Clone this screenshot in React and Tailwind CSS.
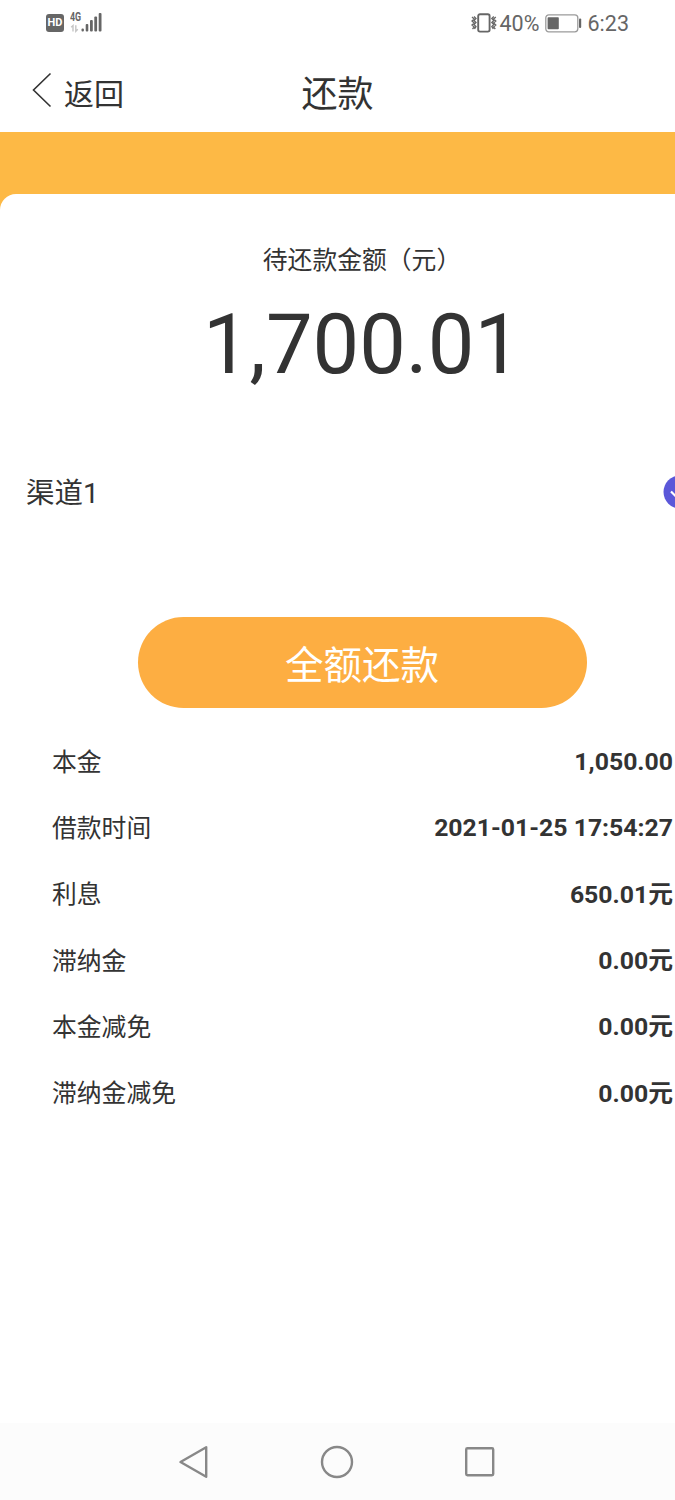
const details = [
  { label: '本金', value: '1,050.00' },
  { label: '借款时间', value: '2021-01-25 17:54:27' },
  { label: '利息', value: '650.01元' },
  { label: '滞纳金', value: '0.00元' },
  { label: '本金减免', value: '0.00元' },
  { label: '滞纳金减免', value: '0.00元' },
]

function SignalIcon() {
  return (
    <svg width="33" height="24" viewBox="0 0 33 24" fill="none">
      <g stroke="#c4c4c4" strokeWidth="1.4">
        <path d="M1.2 16.2 3 14.5V20.5M5.8 14.2V20.2L7.8 18.2" />
      </g>
      <g fill="#666">
        <rect x="11.5" y="17.5" width="2.4" height="3" rx="1" />
        <rect x="15.7" y="13" width="2.6" height="7.5" rx="1" />
        <rect x="20" y="9" width="2.8" height="11.5" rx="1" />
        <rect x="24.3" y="5.5" width="2.8" height="15" rx="1" />
        <rect x="28.7" y="2" width="2.8" height="18.5" rx="1" />
      </g>
    </svg>
  )
}

function VibrateIcon() {
  return (
    <svg width="26" height="20" viewBox="0 0 26 20" fill="none" stroke="#666">
      <rect x="7.2" y="1.2" width="11.4" height="17.4" rx="1.8" strokeWidth="1.9" />
      <path d="M1 4 3.2 6 1 8 3.2 10 1 12 3.2 14 1.5 16M3 3.5 5 5.5 3 7.5 5 9.5 3 11.5 5 13.5 3.5 16" strokeWidth="1.3" />
      <path d="M24.8 4 22.6 6 24.8 8 22.6 10 24.8 12 22.6 14 24.3 16M22.8 3.5 20.8 5.5 22.8 7.5 20.8 9.5 22.8 11.5 20.8 13.5 22.3 16" strokeWidth="1.3" />
    </svg>
  )
}

function BatteryIcon() {
  return (
    <svg width="37" height="19" viewBox="0 0 37 19" fill="none">
      <rect x="0.8" y="0.8" width="32" height="17" rx="3" stroke="#9b9b9b" strokeWidth="1.3" />
      <rect x="2.6" y="3.2" width="11.2" height="12" rx="0.8" fill="#666" />
      <rect x="34" y="4.5" width="2.2" height="9.5" rx="1" fill="#666" />
    </svg>
  )
}

function StatusBar() {
  return (
    <div className="h-[46px] pl-[46px] pr-[46px] flex items-center justify-between text-[#666]">
      <div className="flex items-center">
        <span className="w-[18px] h-[18px] rounded-[3px] bg-[#666] text-white text-[11px] leading-[18px] font-bold text-center">
          HD
        </span>
        <div className="relative ml-[6px]">
          <span className="absolute left-0 top-0 text-[12px] leading-[13px] font-bold origin-left scale-x-[0.74]">4G</span>
          <SignalIcon />
        </div>
      </div>
      <div className="flex items-center">
        <VibrateIcon />
        <span className="ml-[3px] pt-0.5 text-[21.5px] leading-6 w-[41px] whitespace-nowrap">40%</span>
        <span className="ml-[4px]"><BatteryIcon /></span>
        <span className="ml-[6px] pt-0.5 text-[21.5px] leading-6">6:23</span>
      </div>
    </div>
  )
}

function Header() {
  return (
    <header className="h-[86px] grid grid-cols-3 items-center text-[#333]">
      <button className="flex items-center pl-8">
        <svg className="mt-0.5" width="20" height="36" viewBox="0 0 20 36" fill="none" stroke="#333" strokeWidth="1.6">
          <path d="M18.5 1.5 1.5 18 18.5 34.5" />
        </svg>
        <span className="ml-3 pt-3 text-[30px] leading-10">返回</span>
      </button>
      <h1 className="pt-3 text-center text-4xl leading-10">还款</h1>
    </header>
  )
}

function DetailRow({ label, value }) {
  return (
    <div className="h-[66.3px] flex items-center justify-between text-[24.8px] leading-8">
      <span className="pt-px">{label}</span>
      <span className="font-bold">{value}</span>
    </div>
  )
}

function NavBar() {
  return (
    <nav className="h-[77px] pr-0.5 bg-[#fcfcfc] flex items-center justify-center gap-[109px]">
      <svg width="34" height="34" viewBox="0 0 34 34" fill="none" stroke="#888" strokeWidth="2.4" strokeLinejoin="round">
        <path d="M29.2 2.2V31.8L3.5 17Z" />
      </svg>
      <svg width="34" height="34" viewBox="0 0 34 34" fill="none" stroke="#888" strokeWidth="2.4">
        <circle cx="17" cy="17" r="15" />
      </svg>
      <svg width="34" height="34" viewBox="0 0 34 34" fill="none" stroke="#888" strokeWidth="2.4">
        <rect x="3.2" y="3.2" width="27" height="27" rx="1.2" />
      </svg>
    </nav>
  )
}

export default function App() {
  return (
    <div className="w-[675px] h-[1500px] overflow-hidden flex flex-col bg-white font-[Roboto,'Noto_Sans_CJK_SC',sans-serif] text-[#333]">
      <StatusBar />
      <Header />
      <main className="flex-1 bg-[#fdb945] pt-[62px]">
        {/* content is wider than the screen, the right edge is cut off */}
        <div className="w-[724px] h-full rounded-t-2xl bg-white pt-[51px]">
          <p className="text-center text-[24.8px] leading-8">待还款金额（元）</p>
          <p className="mt-[18px] text-center text-[83px] leading-[100px]">1,700.01</p>

          <div className="mt-[80px] h-[34px] pl-[26px] pr-[27px] flex items-center justify-between">
            <span className="pt-1 text-[28.5px] leading-[34px]">渠道1</span>
            <svg width="34" height="34" viewBox="0 0 34 34" fill="none">
              <circle cx="17" cy="17" r="16.5" fill="#5b57d9" />
              <path d="M8 16.5 14.5 23 26 11.5" stroke="#fff" strokeWidth="2.2" />
            </svg>
          </div>

          <button className="mt-[108px] mx-auto w-[449px] h-[91px] rounded-full bg-[#fdae42] text-white text-[38.5px] leading-[56px] flex items-center justify-center pt-1.5">
            全额还款
          </button>

          <div className="mt-[21px] ml-[52px] mr-[51px]">
            {details.map((item) => (
              <DetailRow key={item.label} {...item} />
            ))}
          </div>
        </div>
      </main>
      <NavBar />
    </div>
  )
}
